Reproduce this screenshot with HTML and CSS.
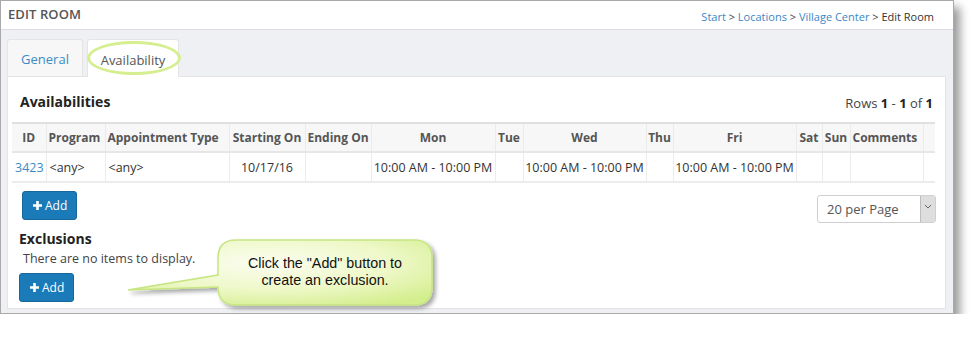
FILE: index.html
```html
<!DOCTYPE html>
<html>
<head>
<meta charset="utf-8">
<link rel="stylesheet" href="styles.css">
</head>
<body>
<div class="frame">
  <div class="header">
    <div class="page-title">EDIT ROOM</div>
    <div class="crumbs"><a>Start</a> &gt; <a>Locations</a> &gt; <a>Village Center</a> &gt; <span>Edit Room</span></div>
  </div>
  <div class="content">
    <div class="tabs">
      <div class="tab">General</div>
      <div class="tab active">Availability</div>
    </div>
    <div class="panel">
      <div class="title-row">
        <h2>Availabilities</h2>
        <div class="rows">Rows <b>1</b> - <b>1</b> of <b>1</b></div>
      </div>
      <table class="grid">
        <colgroup>
          <col style="width:34px"><col style="width:59px"><col style="width:124px"><col style="width:76px"><col style="width:66px"><col style="width:124px"><col style="width:28px"><col style="width:123px"><col style="width:27px"><col style="width:123px"><col style="width:26px"><col style="width:28px"><col style="width:73px"><col style="width:12px">
        </colgroup>
        <thead>
          <tr><th>ID</th><th class="l">Program</th><th class="l">Appointment Type</th><th>Starting On</th><th class="l">Ending On</th><th>Mon</th><th>Tue</th><th>Wed</th><th>Thu</th><th>Fri</th><th>Sat</th><th>Sun</th><th class="l">Comments</th><th></th></tr>
        </thead>
        <tbody>
          <tr><td class="l"><a>3423</a></td><td class="l">&lt;any&gt;</td><td class="l">&lt;any&gt;</td><td>10/17/16</td><td></td><td>10:00 AM - 10:00 PM</td><td></td><td>10:00 AM - 10:00 PM</td><td></td><td>10:00 AM - 10:00 PM</td><td></td><td></td><td></td><td></td></tr>
        </tbody>
      </table>
      <div class="actions">
        <button class="btn"><svg width="9" height="9" viewBox="0 0 9 9"><path d="M3.2 0h2.6v3.2H9v2.6H5.8V9H3.2V5.8H0V3.2h3.2z" fill="#fff"/></svg>Add</button>
        <div class="select"><span>20 per Page</span><span class="arrow"><svg width="8" height="5" viewBox="0 0 8 5"><path d="M1 1l3 3 3-3" fill="none" stroke="#666" stroke-width="1"/></svg></span></div>
      </div>
      <h3>Exclusions</h3>
      <div class="empty">There are no items to display.</div>
      <button class="btn btn2"><svg width="9" height="9" viewBox="0 0 9 9"><path d="M3.2 0h2.6v3.2H9v2.6H5.8V9H3.2V5.8H0V3.2h3.2z" fill="#fff"/></svg>Add</button>
    </div>
  </div>
  <div class="ring"></div>
  <div class="callout">
    <svg width="320" height="80" viewBox="0 0 320 80">
      <defs>
        <radialGradient id="g" cx="0.45" cy="0.35" r="0.75">
          <stop offset="0" stop-color="#fbfdf0"/>
          <stop offset="0.55" stop-color="#eef8c8"/>
          <stop offset="1" stop-color="#d3ee8c"/>
        </radialGradient>
        <filter id="sh" x="-10%" y="-20%" width="130%" height="150%">
          <feDropShadow dx="3" dy="3" stdDeviation="2.2" flood-color="#000" flood-opacity="0.35"/>
        </filter>
      </defs>
      <path d="M116 5H294Q312 5 312 23V52Q312 70 294 70H116Q98 70 98 52L8 55L98 40V23Q98 5 116 5Z" fill="url(#g)" stroke="#c6e583" stroke-width="1.5" filter="url(#sh)"/>
    </svg>
    <div class="callout-text">Click the "Add" button to<br>create an exclusion.</div>
  </div>
</div>
</body>
</html>
```

FILE: styles.css
```css
* { box-sizing: border-box; }
body {
  margin: 0;
  background: #fff;
  font-family: "Open Sans", "Noto Sans", sans-serif;
  color: #333;
}
.frame {
  position: relative;
  width: 954px;
  height: 314px;
  border: 1px solid #a9a9a9;
  box-shadow: 6px 7px 9px rgba(0,0,0,0.4);
  background: #eff0f4;
}
.header {
  height: 29px;
  background: #fff;
  border-bottom: 1px solid #dcdde2;
  display: flex;
  align-items: center;
  justify-content: space-between;
  padding: 0 19px 2px 7px;
}
.page-title {
  font-size: 13px;
  font-weight: 600;
  color: #555;
  letter-spacing: 0.1px;
}
.crumbs {
  font-size: 11px;
  color: #444;
  padding-top: 5px;
}
.crumbs a { color: #3b87c6; }
.crumbs span { color: #333; }
.content {
  padding: 9px 7px 0 6px;
}
.tabs {
  display: flex;
  gap: 4px;
  height: 37px;
}
.tab {
  width: 76px;
  height: 37px;
  display: flex;
  align-items: center;
  justify-content: center;
  font-size: 13px;
  color: #3a8bc6;
  background: #f7f7f7;
  border: 1px solid #e4e4e4;
  border-bottom: none;
  border-radius: 3px 3px 0 0;
  padding-top: 2px;
}
.tab.active {
  width: 92px;
  background: #fff;
  color: #555;
  position: relative;
  z-index: 1;
  height: 38px;
}
.panel {
  background: #fff;
  border: 1px solid #e4e4e4;
  height: 233px;
  padding: 0 9px 0 4px;
}
.title-row {
  display: flex;
  justify-content: space-between;
  align-items: center;
  height: 45px;
  padding: 4px 3px 0 8px;
}
h2 {
  margin: 0;
  font-size: 14px;
  font-weight: 700;
  color: #222;
}
.rows {
  font-size: 13px;
  color: #444;
  padding-top: 3px;
}
.rows b { color: #222; }
.grid {
  table-layout: fixed;
  width: 923px;
  border-collapse: collapse;
  font-size: 12.5px;
}
.grid th {
  height: 29px;
  background: #f7f7f7;
  font-weight: 700;
  color: #555;
  border-top: 2px solid #e0e0e0;
  border-bottom: 2px solid #e6e6e6;
  border-left: 1px solid #ebebeb;
  text-align: center;
  padding: 0 1px;
  white-space: nowrap;
  overflow: hidden;
  font-size: 12px;
}
.grid td {
  height: 30px;
  border-bottom: 2px solid #ececec;
  border-left: 1px solid #ececec;
  text-align: center;
  padding: 0 1px;
  white-space: nowrap;
  overflow: hidden;
  color: #333;
}
.grid tr > :first-child { border-left: none; }
.grid .l { text-align: left; padding-left: 3px; }
.grid th.l { padding-left: 2px; }
.grid td a { color: #3a8bc6; }
.actions {
  display: flex;
  justify-content: space-between;
  align-items: flex-start;
  padding: 8px 0 0 10px;
  height: 46px;
}
.btn {
  display: flex;
  align-items: center;
  gap: 3px;
  width: 55px;
  height: 29px;
  padding: 0 0 0 10px;
  border: 1px solid #17679c;
  border-radius: 3px;
  background: #1b7ab8;
  color: #fff;
  font-family: "Open Sans", "Noto Sans", sans-serif;
  font-size: 12px;
}
.select {
  margin-top: 4px;
  width: 119px;
  height: 28px;
  border: 1px solid #cfcfcf;
  border-radius: 3px;
  display: flex;
  justify-content: space-between;
  align-items: stretch;
  font-size: 13px;
  color: #555;
}
.select span:first-child {
  padding: 4px 0 0 9px;
}
.arrow {
  width: 15px;
  background: #dedede;
  border-left: 1px solid #bdbdbd;
  border-radius: 0 2px 2px 0;
  display: flex;
  align-items: center;
  justify-content: center;
  padding-bottom: 6px;
}
h3 {
  margin: 0 0 0 7px;
  font-size: 14px;
  font-weight: 700;
  color: #222;
  line-height: 20px;
}
.empty {
  margin: 1px 0 0 11px;
  font-size: 12.5px;
  color: #444;
  line-height: 18px;
}
.btn2 {
  margin: 5px 0 0 7px;
}
.ring {
  position: absolute;
  left: 86px;
  top: 40px;
  width: 94px;
  height: 34px;
  border: 3px solid #d5ee8f;
  border-radius: 50%;
  z-index: 2;
}
.callout {
  position: absolute;
  left: 119px;
  top: 234px;
  width: 320px;
  height: 80px;
  z-index: 3;
}
.callout svg { position: absolute; left: 0; top: 0; }
.callout-text {
  position: absolute;
  left: 98px;
  top: 20px;
  width: 214px;
  text-align: center;
  font-family: "Liberation Sans", Arial, sans-serif;
  font-size: 14.3px;
  line-height: 17px;
  color: #111;
}
```
